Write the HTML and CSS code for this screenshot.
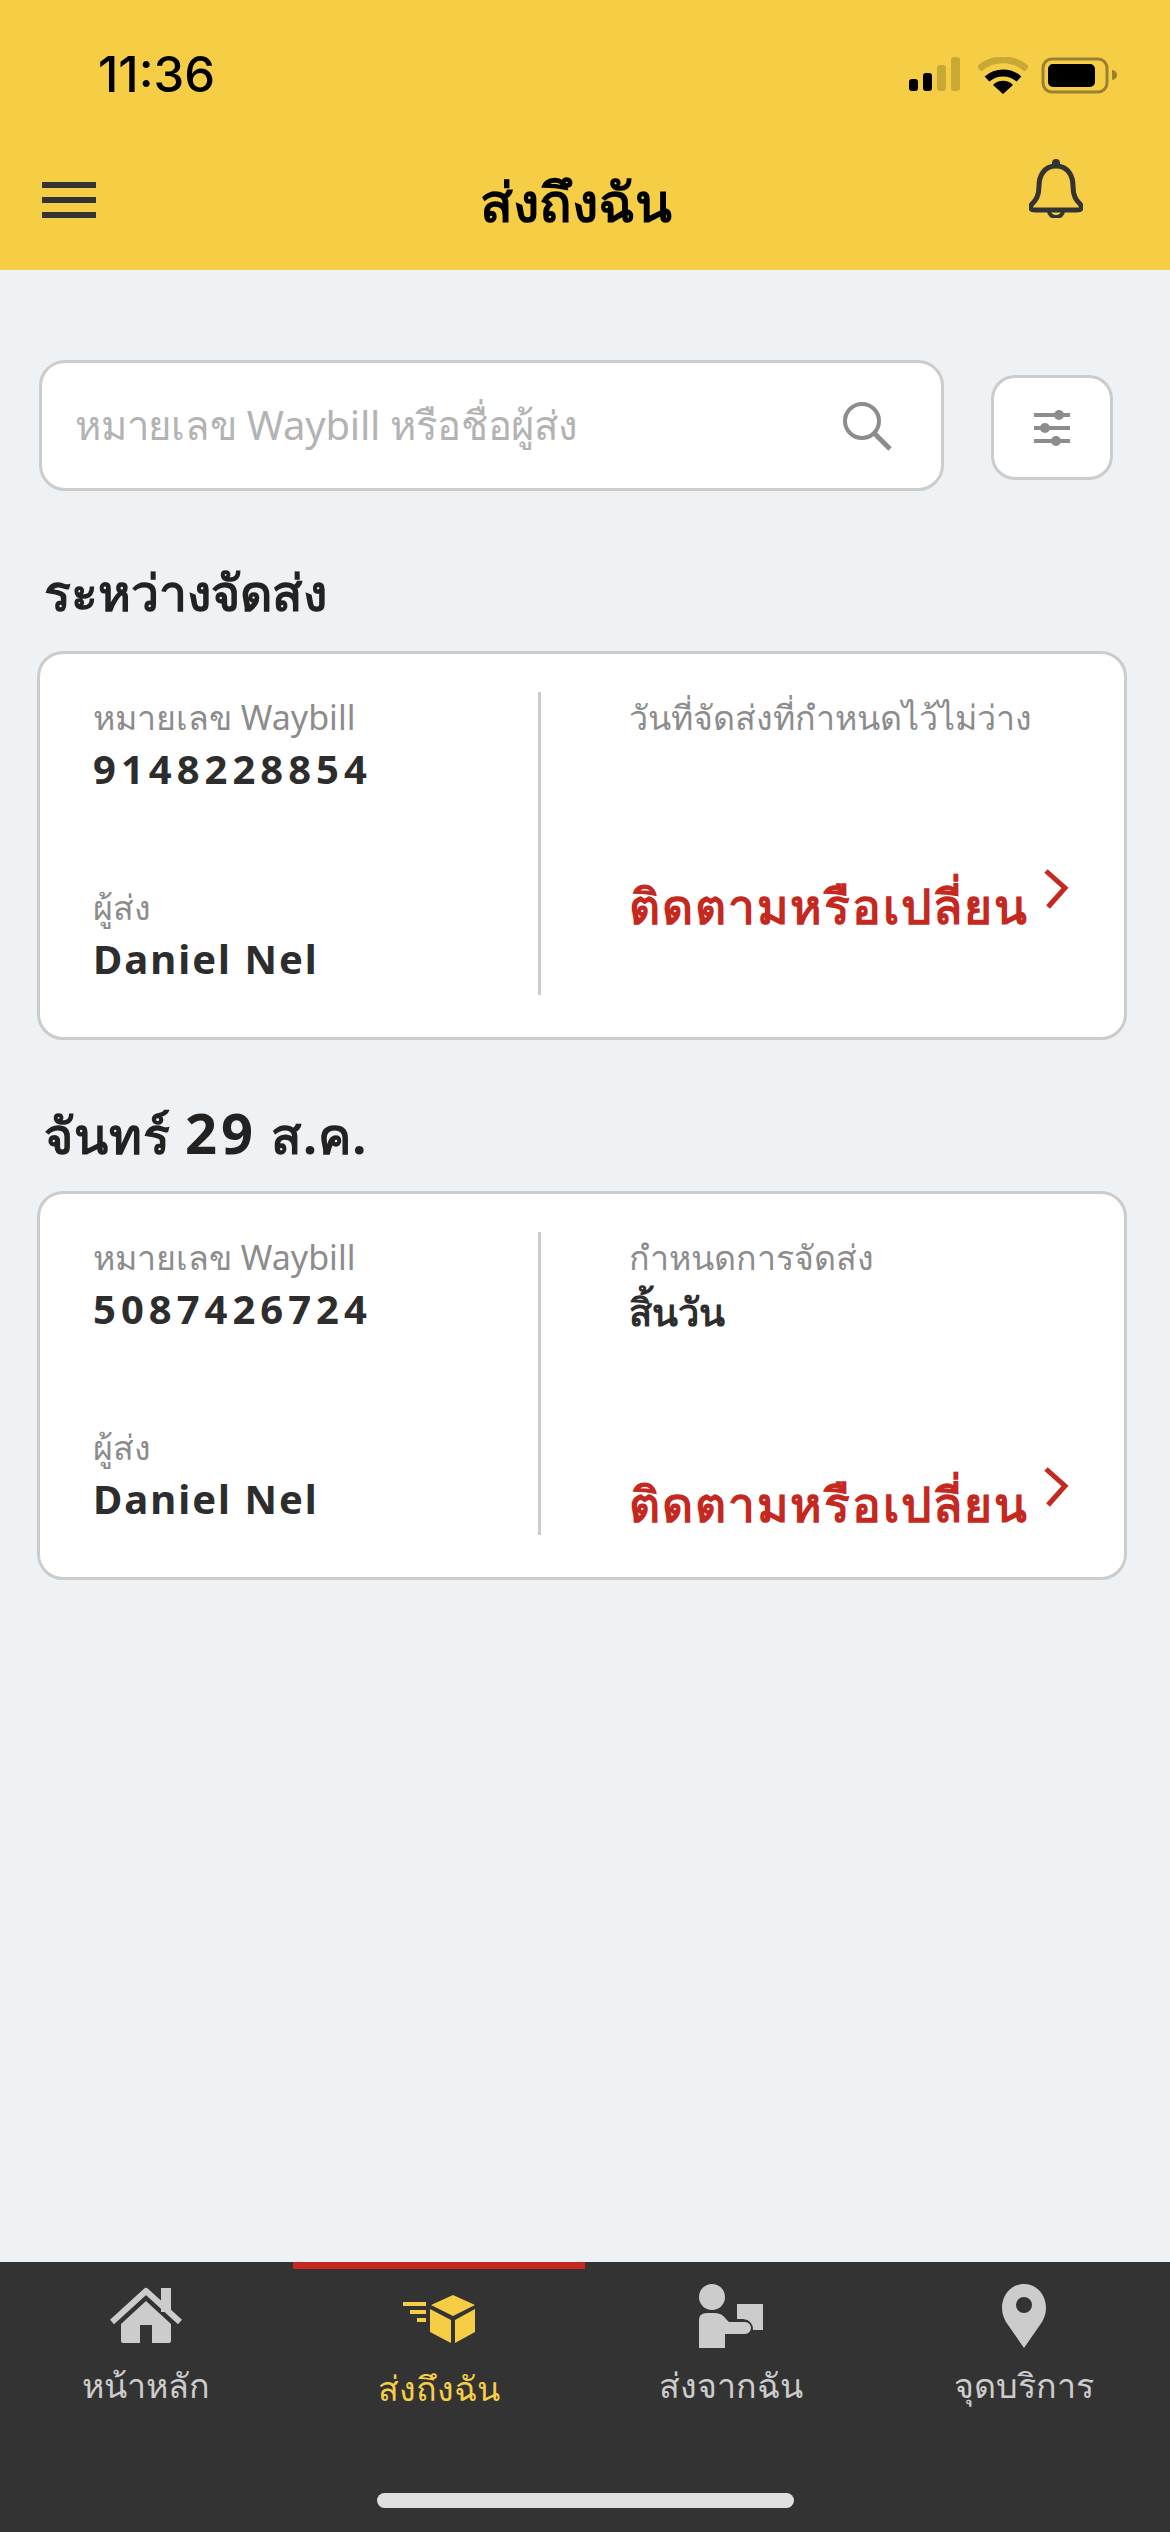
FILE: index.html
```html
<!DOCTYPE html>
<html lang="th">
  <head>
    <meta charset="UTF-8" />
    <meta name="viewport" content="width=device-width, initial-scale=1.0" />
    <title>ส่งถึงฉัน</title>
    <link rel="stylesheet" href="styles.css">
  </head>
  <body>
    <!-- Header -->
    <header class="header">
      <div class="status-bar">
        <span class="time">11:36</span>
        <div class="status-icons">
          <svg width="56" height="36" viewBox="0 0 56 36">
            <rect x="0" y="22" width="9" height="12" rx="3" fill="#000" />
            <rect x="14" y="16" width="9" height="18" rx="3" fill="#000" />
            <rect x="28" y="8" width="9" height="26" rx="3" fill="#c9a935" />
            <rect x="42" y="0" width="9" height="34" rx="3" fill="#c9a935" />
          </svg>
          <svg width="50" height="38" viewBox="0 0 50 38">
            <path d="M1 12 A36 36 0 0 1 49 12" fill="none" stroke="#c9a935" stroke-width="7" />
            <path d="M9 22 A24 24 0 0 1 41 22" fill="none" stroke="#000" stroke-width="7" />
            <path d="M15 28 A14 14 0 0 1 35 28 L25 37 Z" fill="#000" />
          </svg>
          <svg width="76" height="38" viewBox="0 0 76 38">
            <rect x="2" y="2" width="64" height="33" rx="9" fill="none" stroke="#9a8030" stroke-width="3" />
            <rect x="7" y="7" width="47" height="23" rx="5" fill="#000" />
            <path d="M71 13 A5 5 0 0 1 71 23 Z" fill="#9a8030" />
          </svg>
        </div>
      </div>
      <div class="nav-bar">
        <div class="menu-icon"><span></span><span></span><span></span></div>
        <h1>ส่งถึงฉัน</h1>
        <svg class="bell" width="54" height="60" viewBox="0 0 54 60">
          <circle cx="27" cy="5" r="4" fill="#333" />
          <path d="M27 8 C15 8 10 18 10 28 C10 38 7 42 3 46 C0 50 2 52 6 52 L48 52 C52 52 54 50 51 46 C47 42 44 38 44 28 C44 18 39 8 27 8 Z" fill="none" stroke="#333" stroke-width="5" />
          <path d="M20 53 A7 6 0 0 0 34 53" fill="none" stroke="#333" stroke-width="4" />
        </svg>
      </div>
    </header>

    <main class="content">
      <div class="search-row">
        <div class="search-box">
          <span class="placeholder">หมายเลข Waybill หรือชื่อผู้ส่ง</span>
          <svg width="50" height="50" viewBox="0 0 50 50">
            <circle cx="20" cy="20" r="17" fill="none" stroke="#8c8c8c" stroke-width="4" />
            <path d="M32 32 L48 48" stroke="#8c8c8c" stroke-width="5" />
          </svg>
        </div>
        <div class="filter-btn">
          <svg width="36" height="38" viewBox="0 0 36 38">
            <path d="M0 6 H36 M0 19 H36 M0 32 H36" stroke="#8c8c8c" stroke-width="4" />
            <circle cx="25" cy="6" r="5" fill="#8c8c8c" />
            <circle cx="11" cy="19" r="5" fill="#8c8c8c" />
            <circle cx="22" cy="32" r="5" fill="#8c8c8c" />
          </svg>
        </div>
      </div>

      <h2 class="section-title">ระหว่างจัดส่ง</h2>
      <section class="card">
        <div class="col col-left">
          <div class="label">หมายเลข Waybill</div>
          <div class="value num">9148228854</div>
          <div class="label sender">ผู้ส่ง</div>
          <div class="value name">Daniel Nel</div>
        </div>
        <div class="col col-right">
          <div class="label">วันที่จัดส่งที่กำหนดไว้ไม่ว่าง</div>
          <div class="track">
            <span>ติดตามหรือเปลี่ยน</span>
            <svg width="26" height="40" viewBox="0 0 26 40">
              <path d="M3 2 L22 19 L5 38" fill="none" stroke="#c4281f" stroke-width="5" />
            </svg>
          </div>
        </div>
      </section>

      <h2 class="section-title second">จันทร์ <span class="day">29</span> ส.ค.</h2>
      <section class="card">
        <div class="col col-left">
          <div class="label">หมายเลข Waybill</div>
          <div class="value num">5087426724</div>
          <div class="label sender">ผู้ส่ง</div>
          <div class="value name">Daniel Nel</div>
        </div>
        <div class="col col-right">
          <div class="label">กำหนดการจัดส่ง</div>
          <div class="value when">สิ้นวัน</div>
          <div class="track">
            <span>ติดตามหรือเปลี่ยน</span>
            <svg width="26" height="40" viewBox="0 0 26 40">
              <path d="M3 2 L22 19 L5 38" fill="none" stroke="#c4281f" stroke-width="5" />
            </svg>
          </div>
        </div>
      </section>
    </main>

    <!-- Bottom tabs -->
    <nav class="tabbar">
      <div class="tab">
        <svg width="72" height="56" viewBox="0 0 72 56">
          <rect x="51" y="0" width="10" height="24" fill="#ccc" />
          <path d="M2 34 L36 3 L70 34" fill="none" stroke="#ccc" stroke-width="6" stroke-linejoin="round" />
          <path d="M36 13 L61 36 V53 Q61 55 59 55 H42 V37 H30 V55 H13 Q11 55 11 53 V36 Z" fill="#ccc" />
        </svg>
        <span>หน้าหลัก</span>
      </div>
      <div class="tab active">
        <svg width="72" height="56" viewBox="0 0 72 56">
          <path d="M0 16 H23 M7 24 H23 M14 32 H23" stroke="#f6ce46" stroke-width="4" />
          <path d="M50 7 L72 17 L50 28 L28 17 Z" fill="#f6ce46" />
          <path d="M27 21 L48 32 V55 L27 44 Z" fill="#f6ce46" />
          <path d="M52 32 L72 21 V44 L52 55 Z" fill="#f6ce46" />
        </svg>
        <span>ส่งถึงฉัน</span>
      </div>
      <div class="tab">
        <svg width="64" height="64" viewBox="0 0 64 64">
          <circle cx="13" cy="13" r="13" fill="#ccc" />
          <path d="M0 36 Q0 29 8 29 H16 Q23 29 27 35 L30 38 H46 A6 6 0 0 1 46 50 H26 V64 H0 Z" fill="#ccc" />
          <path d="M38 20 H64 V46 H54 Q54 36 44 35 H38 Z" fill="#ccc" />
        </svg>
        <span>ส่งจากฉัน</span>
      </div>
      <div class="tab">
        <svg width="44" height="64" viewBox="0 0 44 64">
          <path fill-rule="evenodd" d="M22 0 C34 0 44 10 44 24 C44 30 42 34 40 38 L22 64 L4 38 C2 34 0 30 0 24 C0 10 10 0 22 0 Z M22 13 A8 8 0 1 0 22 29 A8 8 0 1 0 22 13 Z" fill="#ccc" />
        </svg>
        <span>จุดบริการ</span>
      </div>
      <div class="home-bar"></div>
    </nav>
  </body>
</html>
```

FILE: styles.css
```css
* {
  box-sizing: border-box;
}
body {
  margin: 0;
  width: 1170px;
  height: 2532px;
  display: flex;
  flex-direction: column;
  overflow: hidden;
  background-color: #eef2f5;
  font-family: "Noto Sans", "Open Sans", sans-serif;
  color: #2d2d2d;
}
.header {
  height: 270px;
  background-color: #f6ce46;
}
.status-bar {
  height: 150px;
  padding: 47px 53px 0 98px;
  display: flex;
  justify-content: space-between;
}
.time {
  font-family: Inter, "Liberation Sans", sans-serif;
  font-size: 49px;
  font-weight: 500;
  line-height: 56px;
  color: #000;
}
.status-icons {
  display: flex;
  align-items: flex-start;
  gap: 13px;
  padding-top: 10px;
}
.nav-bar {
  display: flex;
  justify-content: space-between;
  align-items: center;
  padding: 0 87px 0 42px;
  height: 100px;
}
.menu-icon {
  width: 54px;
  display: flex;
  flex-direction: column;
  gap: 9px;
}
.menu-icon span {
  height: 6px;
  background-color: #333;
}
.nav-bar h1 {
  margin: 6px 0 0 26px;
  font-size: 54px;
  font-weight: 700;
  color: #000;
}
.bell {
  align-self: flex-start;
  margin-top: 8px;
}
.content {
  flex: 1;
  padding: 90px 43px 0 37px;
}
.search-row {
  display: flex;
  align-items: center;
  gap: 47px;
  padding: 0 14px 0 2px;
}
.search-box {
  width: 905px;
  height: 131px;
  padding: 0 49px 0 33px;
  display: flex;
  justify-content: space-between;
  align-items: center;
  background-color: #fff;
  border: 3px solid #ccc;
  border-radius: 26px;
}
.placeholder {
  font-size: 40px;
  letter-spacing: -0.2px;
  color: #b3b3b3;
}
.filter-btn {
  width: 122px;
  height: 105px;
  margin-top: 4px;
  display: flex;
  justify-content: center;
  align-items: center;
  background-color: #fff;
  border: 3px solid #ccc;
  border-radius: 24px;
}
.section-title {
  margin: 66px 0 24px 7px;
  font-size: 50px;
  font-weight: 700;
  line-height: 70px;
  color: #222;
}
.section-title.second {
  margin-top: 57px;
  margin-bottom: 21px;
  letter-spacing: 1px;
}
.day {
  letter-spacing: 4px;
  font-size: 56px;
}
.card {
  height: 389px;
  padding: 38px 0 42px;
  display: flex;
  background-color: #fff;
  border: 3px solid #ccc;
  border-radius: 26px;
}
.col-left {
  width: 501px;
  padding-left: 53px;
  border-right: 3px solid #ccc;
}
.col-right {
  flex: 1;
  padding-left: 88px;
}
.label {
  font-size: 34px;
  line-height: 50px;
  color: #8c8c8c;
}
.value {
  font-size: 40px;
  font-weight: 700;
  line-height: 54px;
  color: #2d2d2d;
}
.num {
  letter-spacing: 5px;
}
.name {
  letter-spacing: 2px;
}
.when {
  font-size: 38px;
  line-height: 58px;
}
.sender {
  margin-top: 86px;
}
.track {
  margin-top: 127px;
  display: flex;
  align-items: flex-start;
  gap: 14px;
  font-size: 48px;
  font-weight: 700;
  letter-spacing: 1.9px;
  color: #c4281f;
}
.tabbar {
  height: 270px;
  display: grid;
  grid-template-columns: repeat(4, 1fr);
  background-color: #333;
  position: relative;
}
.tab {
  display: flex;
  flex-direction: column;
  align-items: center;
  padding-top: 22px;
  font-size: 34px;
  font-weight: 300;
  color: #ccc;
}
.tab svg {
  height: 64px;
}
.tab span {
  margin-top: 11px;
}
.tab.active {
  color: #f6ce46;
  border-top: 7px solid #c4281f;
  padding-top: 15px;
}
.tab.active span {
  margin-top: 14px;
}
.home-bar {
  position: absolute;
  left: 377px;
  top: 231px;
  width: 417px;
  height: 15px;
  border-radius: 8px;
  background-color: #e0e0e0;
}
```
